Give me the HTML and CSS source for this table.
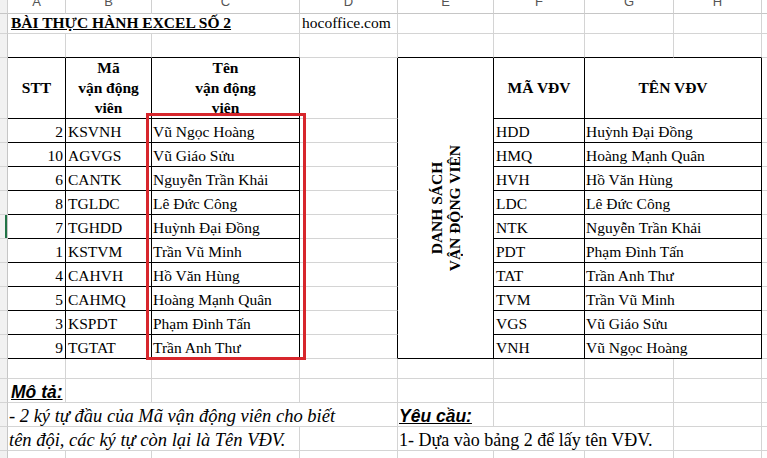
FILE: index.html
```html
<!DOCTYPE html>
<html lang="vi">
<head>
<meta charset="utf-8">
<title>Bài thực hành Excel số 2</title>
<link rel="stylesheet" href="styles.css">
</head>
<body>
<div class="sheet">
  <!-- column headers -->
  <div class="c ch corner"></div>
  <div class="c ch">A</div>
  <div class="c ch">B</div>
  <div class="c ch">C</div>
  <div class="c ch">D</div>
  <div class="c ch">E</div>
  <div class="c ch">F</div>
  <div class="c ch">G</div>
  <div class="c ch">H</div>
  <div class="c ch last"></div>

  <!-- row 1 -->
  <div class="c rh"></div>
  <div class="c s3 title">BÀI THỰC HÀNH EXCEL SỐ 2</div>
  <div class="c">hocoffice.com</div>
  <div class="c"></div><div class="c"></div><div class="c"></div><div class="c"></div>
  <div class="c last"></div>

  <!-- row 2 -->
  <div class="c rh"></div>
  <div class="c bb"></div><div class="c bb"></div><div class="c bb"></div>
  <div class="c"></div>
  <div class="c bb"></div><div class="c bb"></div><div class="c bb"></div><div class="c bb"></div>
  <div class="c last"></div>

  <!-- row 3: headers -->
  <div class="c rh"></div>
  <div class="c hd br bb">STT</div>
  <div class="c hd br bb">Mã<br>vận động<br>viên</div>
  <div class="c hd br bb">Tên<br>vận động<br>viên</div>
  <div class="c br"></div>
  <div class="c vmerge br bb"><div class="vt">DANH SÁCH<br>VẬN ĐỘNG VIÊN</div></div>
  <div class="c hd br bb">MÃ VĐV</div>
  <div class="c s2 hd br bb">TÊN VĐV</div>
  <div class="c last"></div>

  <!-- data rows -->
  <div class="c rh"></div>
  <div class="c num br bb">2</div><div class="c code br bb">KSVNH</div><div class="c name br bb">Vũ Ngọc Hoàng</div>
  <div class="c br"></div>
  <div class="c code br bb">HDD</div><div class="c s2 name br bb">Huỳnh Đại Đồng</div>
  <div class="c last"></div>

  <div class="c rh"></div>
  <div class="c num br bb">10</div><div class="c code br bb">AGVGS</div><div class="c name br bb">Vũ Giáo Sửu</div>
  <div class="c br"></div>
  <div class="c code br bb">HMQ</div><div class="c s2 name br bb">Hoàng Mạnh Quân</div>
  <div class="c last"></div>

  <div class="c rh"></div>
  <div class="c num br bb">6</div><div class="c code br bb">CANTK</div><div class="c name br bb">Nguyễn Trần Khải</div>
  <div class="c br"></div>
  <div class="c code br bb">HVH</div><div class="c s2 name br bb">Hồ Văn Hùng</div>
  <div class="c last"></div>

  <div class="c rh"></div>
  <div class="c num br bb">8</div><div class="c code br bb">TGLDC</div><div class="c name br bb">Lê Đức Công</div>
  <div class="c br"></div>
  <div class="c code br bb">LDC</div><div class="c s2 name br bb">Lê Đức Công</div>
  <div class="c last"></div>

  <div class="c rh sel"></div>
  <div class="c num br bb">7</div><div class="c code br bb">TGHDD</div><div class="c name br bb">Huỳnh Đại Đồng</div>
  <div class="c br"></div>
  <div class="c code br bb">NTK</div><div class="c s2 name br bb">Nguyễn Trần Khải</div>
  <div class="c last"></div>

  <div class="c rh"></div>
  <div class="c num br bb">1</div><div class="c code br bb">KSTVM</div><div class="c name br bb">Trần Vũ Minh</div>
  <div class="c br"></div>
  <div class="c code br bb">PDT</div><div class="c s2 name br bb">Phạm Đình Tấn</div>
  <div class="c last"></div>

  <div class="c rh"></div>
  <div class="c num br bb">4</div><div class="c code br bb">CAHVH</div><div class="c name br bb">Hồ Văn Hùng</div>
  <div class="c br"></div>
  <div class="c code br bb">TAT</div><div class="c s2 name br bb">Trần Anh Thư</div>
  <div class="c last"></div>

  <div class="c rh"></div>
  <div class="c num br bb">5</div><div class="c code br bb">CAHMQ</div><div class="c name br bb">Hoàng Mạnh Quân</div>
  <div class="c br"></div>
  <div class="c code br bb">TVM</div><div class="c s2 name br bb">Trần Vũ Minh</div>
  <div class="c last"></div>

  <div class="c rh"></div>
  <div class="c num br bb">3</div><div class="c code br bb">KSPDT</div><div class="c name br bb">Phạm Đình Tấn</div>
  <div class="c br"></div>
  <div class="c code br bb">VGS</div><div class="c s2 name br bb">Vũ Giáo Sửu</div>
  <div class="c last"></div>

  <div class="c rh"></div>
  <div class="c num br bb">9</div><div class="c code br bb">TGTAT</div><div class="c name br bb">Trần Anh Thư</div>
  <div class="c br"></div>
  <div class="c code br bb">VNH</div><div class="c s2 name br bb">Vũ Ngọc Hoàng</div>
  <div class="c last"></div>

  <!-- row 14 -->
  <div class="c rh"></div>
  <div class="c"></div><div class="c"></div><div class="c"></div><div class="c"></div>
  <div class="c"></div><div class="c"></div><div class="c"></div><div class="c"></div>
  <div class="c last"></div>

  <!-- row 15 -->
  <div class="c rh"></div>
  <div class="c ar">Mô tả:</div>
  <div class="c"></div><div class="c"></div><div class="c"></div>
  <div class="c"></div><div class="c"></div><div class="c"></div><div class="c"></div>
  <div class="c last"></div>

  <!-- row 16 -->
  <div class="c rh"></div>
  <div class="c s4 it">- 2 ký tự đầu của Mã vận động viên cho biết</div>
  <div class="c ar ar2">Yêu cầu:</div>
  <div class="c"></div><div class="c"></div><div class="c"></div>
  <div class="c last"></div>

  <!-- row 17 -->
  <div class="c rh"></div>
  <div class="c s3 it">tên đội, các ký tự còn lại là Tên VĐV.</div>
  <div class="c"></div>
  <div class="c s3 req">1- Dựa vào bảng 2 để lấy tên VĐV.</div>
  <div class="c"></div>
  <div class="c last"></div>

  <!-- row 18 -->
  <div class="c rh"></div>
  <div class="c"></div><div class="c"></div><div class="c"></div><div class="c"></div>
  <div class="c"></div><div class="c"></div><div class="c"></div><div class="c"></div>
  <div class="c last"></div>

  <div class="mark"></div>
</div>
</body>
</html>
```

FILE: styles.css
```css
html, body {
  margin: 0;
  padding: 0;
  background: #ffffff;
}

body {
  width: 767px;
  height: 458px;
  overflow: hidden;
  font-family: "Liberation Serif", "Times New Roman", serif;
  font-size: 15.5px;
  color: #000;
}

.sheet {
  position: relative;
  display: grid;
  grid-template-columns: 8px 58px 86px 148px 98px 96px 91px 89px 88px 5px;
  grid-template-rows: 14px 20px 24px 61px repeat(10, 24px) 20px 24px 24px 24px 8px;
}

.c {
  box-sizing: border-box;
  min-width: 0;
  display: flex;
  align-items: flex-end;
  padding: 0 2px 1px 2px;
  line-height: 18px;
  white-space: nowrap;
  border-right: 1px solid #d4d4d4;
  border-bottom: 1px solid #d4d4d4;
}

.last {
  border-right: none;
}

/* column header */
.ch {
  align-items: flex-start;
  justify-content: center;
  overflow: hidden;
  padding: 0;
  font-family: "Liberation Sans", Arial, sans-serif;
  font-size: 13px;
  line-height: 4px;
  color: #555;
  border-bottom-color: #c6c6c6;
  border-right-color: #d0d0d0;
}

/* row header */
.rh {
  padding: 0;
  background: #f1f1f1;
  border-right-color: #c6c6c6;
}

.corner {
  background: #f1f1f1;
}

.sel {
  box-shadow: inset -2px 0 0 #217346;
}

/* black table borders */
.br { border-right-color: #000; }
.bb { border-bottom-color: #000; }

.title {
  font-weight: bold;
  text-decoration: underline;
  padding-left: 3px;
}

.hd {
  font-weight: bold;
  align-items: center;
  justify-content: center;
  text-align: center;
  line-height: 20px;
  white-space: normal;
  padding: 0;
}

.num {
  justify-content: flex-end;
}

.code {
  padding-left: 2px;
}

.name {
  padding-left: 1px;
}

.s2 { grid-column: span 2; }
.s3 { grid-column: span 3; }
.s4 { grid-column: span 4; }

.vmerge {
  grid-row: span 11;
  align-items: center;
  justify-content: center;
  padding: 0;
}

.vt {
  writing-mode: vertical-rl;
  transform: rotate(180deg);
  font-weight: bold;
  line-height: 18px;
  text-align: center;
  white-space: nowrap;
}

.ar {
  font-family: "Liberation Sans", Arial, sans-serif;
  font-weight: bold;
  font-style: italic;
  text-decoration: underline;
  font-size: 17.5px;
  padding-left: 3px;
}

.ar2 {
  padding-left: 1px;
}

.it {
  font-style: italic;
  font-size: 18.5px;
  padding-left: 1px;
}

.req {
  font-size: 18px;
  padding-left: 1px;
}

.mark {
  position: absolute;
  left: 146px;
  top: 113px;
  width: 160px;
  height: 247px;
  box-sizing: border-box;
  border: 3px solid #d7262c;
  pointer-events: none;
}
```
